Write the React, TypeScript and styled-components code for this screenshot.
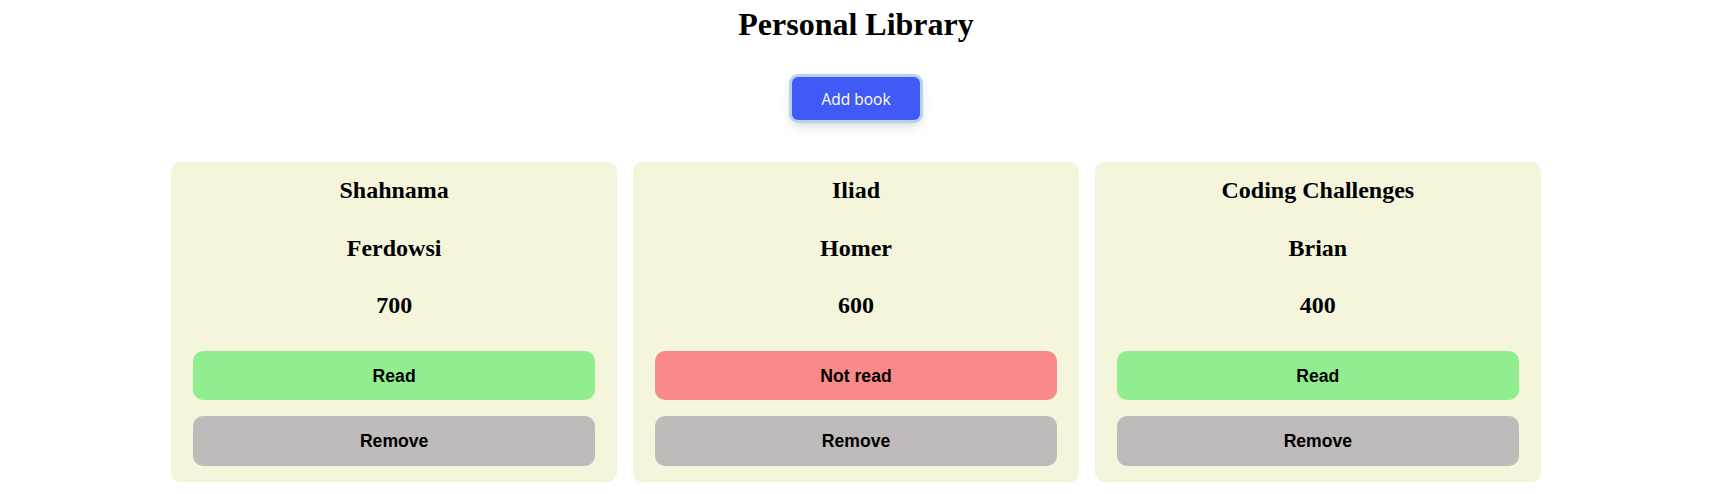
import styled, { createGlobalStyle } from "styled-components"

// A single book in the library
interface Book {
	id: string
	title: string
	author: string
	pages: number
	read: boolean
}

const books: Book[] = [
	{ id: "b1", title: "Shahnama", author: "Ferdowsi", pages: 700, read: true },
	{ id: "b2", title: "Iliad", author: "Homer", pages: 600, read: false },
	{ id: "b3", title: "Coding Challenges", author: "Brian", pages: 400, read: true },
]

const GlobalStyle = createGlobalStyle`
	body {
		margin: 0;
		background: #ffffff;
		font-family: "Liberation Serif", "Times New Roman", serif;
		color: #000000;
	}
`

const Page = styled.main`
	display: flex;
	flex-direction: column;
	align-items: center;
	padding-top: 6px;
`

const Title = styled.h1`
	margin: 0;
	font-size: 32px;
	line-height: 37px;
	font-weight: bold;
`

// Blue button with a soft focus ring
const AddButton = styled.button`
	margin-top: 34px;
	width: 128px;
	height: 43px;
	border: none;
	border-radius: 6px;
	background-color: #425af5;
	color: #ffffff;
	font-family: "Open Sans", "Noto Sans", sans-serif;
	font-size: 15.5px;
	cursor: pointer;
	box-shadow: 0 0 0 3px #b6d3eb, 0 5px 12px rgba(0, 0, 0, 0.18);
`

const Grid = styled.section`
	margin-top: 42px;
	width: 80%;
	display: grid;
	grid-template-columns: repeat(3, 1fr);
	gap: 16px;
`

const Card = styled.article`
	display: flex;
	flex-direction: column;
	background-color: #f5f5dc;
	border-radius: 9px;
	padding: 15px 22px 16px 22px;
`

const CardText = styled.h2`
	margin: 0;
	font-size: 24px;
	line-height: 27.6px;
	font-weight: bold;
	text-align: center;

	& + & {
		margin-top: 30px;
	}
`

const Actions = styled.div`
	display: flex;
	flex-direction: column;
	gap: 16px;
	margin-top: 31px;
`

const ActionButton = styled.button<{ $tone: "read" | "unread" | "remove" }>`
	height: 49.5px;
	padding: 1px 0 0 0;
	border: none;
	border-radius: 10px;
	background-color: ${(props) =>
		props.$tone === "read" ? "#90ee90" : props.$tone === "unread" ? "#fa8989" : "#bfbbbb"};
	color: #000000;
	font-family: "Liberation Sans", Arial, sans-serif;
	font-size: 17.6px;
	font-weight: bold;
	cursor: pointer;
`

export default function App() {
	return (
		<>
			<GlobalStyle />
			<Page>
				<Title>Personal Library</Title>
				<AddButton>Add book</AddButton>
				<Grid>
					{books.map((book) => (
						<Card key={book.id}>
							<CardText>{book.title}</CardText>
							<CardText>{book.author}</CardText>
							<CardText>{book.pages}</CardText>
							<Actions>
								<ActionButton $tone={book.read ? "read" : "unread"}>
									{book.read ? "Read" : "Not read"}
								</ActionButton>
								<ActionButton $tone="remove">Remove</ActionButton>
							</Actions>
						</Card>
					))}
				</Grid>
			</Page>
		</>
	)
}
